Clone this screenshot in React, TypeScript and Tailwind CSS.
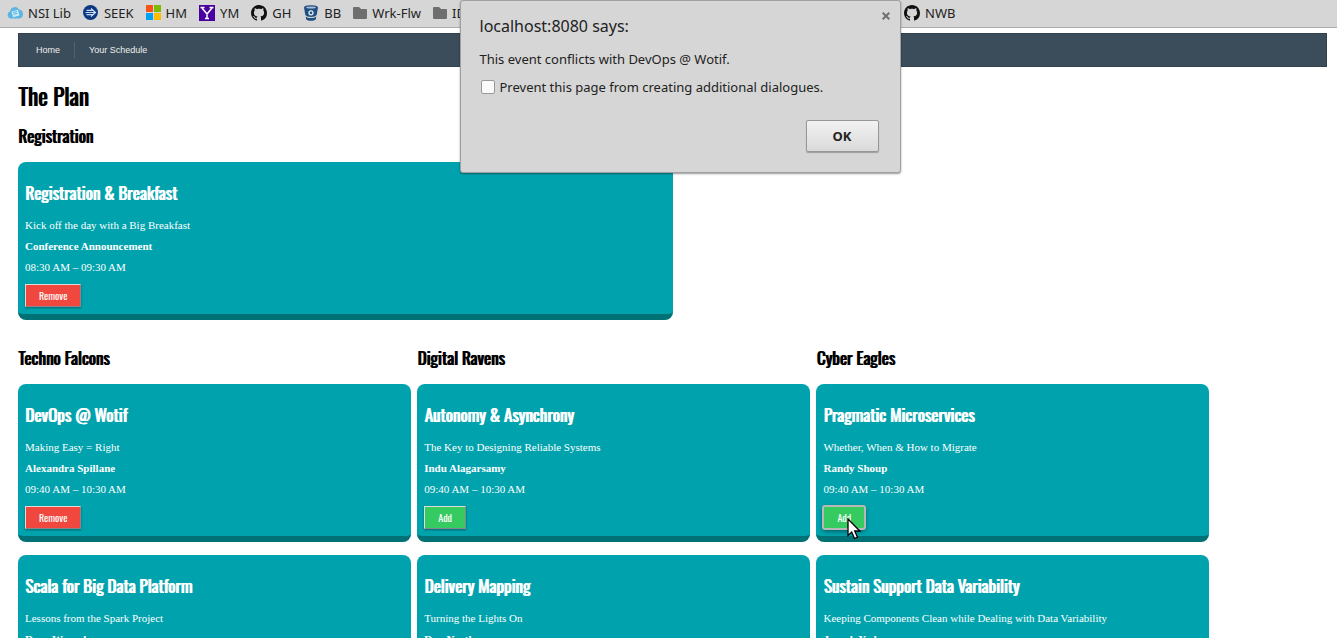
import type { ReactNode } from 'react';

type Session = {
  title: string;
  summary: string;
  speaker: string;
  time: string;
  added?: boolean;
  focused?: boolean;
};

type Track = { name: string; sessions: Session[] };

const registration: Session = {
  title: 'Registration & Breakfast',
  summary: 'Kick off the day with a Big Breakfast',
  speaker: 'Conference Announcement',
  time: '08:30 AM – 09:30 AM',
  added: true,
};

const tracks: Track[] = [
  {
    name: 'Techno Falcons',
    sessions: [
      { title: 'DevOps @ Wotif', summary: 'Making Easy = Right', speaker: 'Alexandra Spillane', time: '09:40 AM – 10:30 AM', added: true },
      { title: 'Scala for Big Data Platform', summary: 'Lessons from the Spark Project', speaker: 'Dean Wampler', time: '10:50 AM – 11:40 AM' },
    ],
  },
  {
    name: 'Digital Ravens',
    sessions: [
      { title: 'Autonomy & Asynchrony', summary: 'The Key to Designing Reliable Systems', speaker: 'Indu Alagarsamy', time: '09:40 AM – 10:30 AM' },
      { title: 'Delivery Mapping', summary: 'Turning the Lights On', speaker: 'Dan North', time: '10:50 AM – 11:40 AM' },
    ],
  },
  {
    name: 'Cyber Eagles',
    sessions: [
      { title: 'Pragmatic Microservices', summary: 'Whether, When & How to Migrate', speaker: 'Randy Shoup', time: '09:40 AM – 10:30 AM', focused: true },
      { title: 'Sustain Support Data Variability', summary: 'Keeping Components Clean while Dealing with Data Variability', speaker: 'Joseph Yoder', time: '10:50 AM – 11:40 AM' },
    ],
  },
];

const CONDENSED = "font-['Oswald','Liberation_Sans_Narrow','Roboto_Condensed',sans-serif]";
const HEADING = `${CONDENSED} font-normal whitespace-nowrap [text-shadow:1px_0_currentColor]`;

function CloudIcon() {
  return (
    <svg viewBox="0 0 16 16" className="size-4" aria-hidden="true">
      <path d="M4 13.500a3.700 3.700 0 0 1-.8-7.200A4.700 4.700 0 0 1 12 4.600a4.500 4.500 0 0 1 .2 8.900z" fill="#5bb5e4" />
      <path d="M4.500 6.500 11 4.800l1.500 5.700-6.500 1.700z" fill="#c9e8f7" />
      <path d="m6 7.500 4-1M6.500 9.300l4-1" stroke="#5bb5e4" fill="none" />
    </svg>
  );
}

function SeekIcon() {
  return (
    <svg viewBox="0 0 16 16" className="size-4" aria-hidden="true">
      <circle cx="7.500" cy="7.500" r="7.500" fill="#0d3880" />
      <path d="M2.500 7.500h10M3.500 5.300h7M3.500 9.700h7M8 3.500l4.500 4L8 11.500" stroke="#c4dcf6" strokeWidth="1.200" fill="none" />
    </svg>
  );
}

function WindowsIcon() {
  return (
    <svg viewBox="0 0 15 15" className="size-[15px]" aria-hidden="true">
      <path d="M0 0h7v7H0z" fill="#f65314" />
      <path d="M8 0h7v7H8z" fill="#7cbb00" />
      <path d="M0 8h7v7H0z" fill="#00a1f1" />
      <path d="M8 8h7v7H8z" fill="#ffbb00" />
    </svg>
  );
}

function YahooIcon() {
  return (
    <svg viewBox="0 0 16 16" className="size-4" aria-hidden="true">
      <path d="M0 0h16v16H0z" fill="#4a00a0" />
      <path d="m3 3 5 6 5-6M8 8.500V14M1.500 2.500h4M10.500 2.500h4M6 13.500h4" stroke="#fff" strokeWidth="1.500" fill="none" />
    </svg>
  );
}

function GithubIcon() {
  return (
    <svg viewBox="0 0 16 16" className="size-4" aria-hidden="true">
      <path
        fill="#111"
        d="M8 0C3.580 0 0 3.580 0 8c0 3.540 2.290 6.530 5.470 7.590.4.070.55-.17.55-.38 0-.19-.01-.82-.01-1.490-2.010.37-2.530-.49-2.690-.94-.09-.23-.48-.94-.82-1.130-.28-.15-.68-.52-.01-.53.63-.01 1.080.58 1.230.82.72 1.210 1.870.87 2.330.66.070-.52.28-.87.51-1.070-1.780-.2-3.640-.89-3.640-3.950 0-.87.31-1.590.82-2.150-.08-.2-.36-1.020.08-2.120 0 0 .67-.21 2.200.82.64-.18 1.320-.27 2-.27s1.360.09 2 .27c1.530-1.040 2.200-.82 2.200-.82.44 1.100.16 1.920.08 2.120.51.56.82 1.270.82 2.150 0 3.070-1.870 3.750-3.650 3.950.29.25.54.73.54 1.480 0 1.070-.01 1.930-.01 2.200 0 .21.15.46.55.38A8.010 8.010 0 0 0 16 8c0-4.420-3.580-8-8-8z"
      />
    </svg>
  );
}

function BucketIcon() {
  return (
    <svg viewBox="0 0 16 16" className="size-4" aria-hidden="true">
      <path d="M1 2.500C1 1 4 .2 8 .2s7 .8 7 2.300L13.700 10c-1 1.300-3 1.900-5.700 1.900S3.300 11.300 2.300 10z" fill="#205081" />
      <path d="M2.700 11.500c1.300 1 3.100 1.500 5.300 1.500s4-.5 5.300-1.500l-.5 3c-1 .9-2.700 1.300-4.800 1.300s-3.800-.4-4.800-1.300z" fill="#205081" />
      <ellipse cx="8" cy="2.500" rx="4.800" ry="1" fill="#a9bdd3" />
      <circle cx="8" cy="7.800" r="2" fill="none" stroke="#e8eef5" strokeWidth="1.300" />
    </svg>
  );
}

function FolderIcon() {
  return (
    <svg viewBox="0 0 14 12" className="h-3 w-3.5" aria-hidden="true">
      <path d="M0 1Q0 0 1 0h5l2 2h5q1 0 1 1v8q0 1-1 1H1q-1 0-1-1z" fill="#6e6e6e" />
    </svg>
  );
}

function Bookmark({ icon, children, className = '' }: { icon: ReactNode; children: ReactNode; className?: string }) {
  return (
    <a href="#" className={`flex shrink-0 items-center gap-[5px] ${className}`}>
      {icon}
      {children}
    </a>
  );
}

function BookmarkBar() {
  return (
    <nav aria-label="Bookmarks" className="flex h-7 items-center gap-3 border-b border-[#acacac] bg-[#d6d6d6] px-[7px] pb-0.5 font-['Noto_Sans',sans-serif] text-[13px] leading-5 text-[#222]">
      <Bookmark icon={<CloudIcon />}>NSI Lib</Bookmark>
      <Bookmark icon={<SeekIcon />}>SEEK</Bookmark>
      <Bookmark icon={<WindowsIcon />}>HM</Bookmark>
      <Bookmark icon={<YahooIcon />}>YM</Bookmark>
      <Bookmark icon={<GithubIcon />}>GH</Bookmark>
      <Bookmark icon={<BucketIcon />}>BB</Bookmark>
      <Bookmark icon={<FolderIcon />}>Wrk-Flw</Bookmark>
      <Bookmark icon={<FolderIcon />} className="w-[459px]">IDE</Bookmark>
      <Bookmark icon={<GithubIcon />}>NWB</Bookmark>
    </nav>
  );
}

function Pointer() {
  return (
    <svg viewBox="0 0 14 22" className="absolute top-3 left-6 h-[22px] w-3.5" aria-hidden="true">
      <path d="M1 1v16.500l3.700-3.400 2.800 6.400 3-1.300-2.800-6.200h5.100z" fill="#fff" stroke="#000" strokeWidth="1.300" />
    </svg>
  );
}

function SessionCard({ session }: { session: Session }) {
  return (
    <article className="rounded-lg border-b-6 border-[#007276] bg-[#00a3ad] px-[7px] pt-[15px] pb-[7px] text-white">
      <h3 className={`${HEADING} text-[17px] leading-8`}>{session.title}</h3>
      <div className="mt-1.5 font-['Liberation_Serif',serif] text-[11px] leading-[21px]">
        <p>{session.summary}</p>
        <p className="font-bold">{session.speaker}</p>
        <p>{session.time}</p>
      </div>
      <div className="relative mt-1.5 flex">
        <button
          type="button"
          className={`${CONDENSED} h-[23px] border px-[13px] text-[10px] leading-5 ${
            session.added ? 'bg-[#f0483e]' : 'bg-[#35cb61]'
          } ${
            session.focused
              ? 'rounded-xs border-[#b8b8b8] shadow-[0_0_0_1px_#b8b8b8,0_2px_5px_#005055]'
              : 'border-t-[#ddd] border-r-[#888] border-b-[#888] border-l-[#ddd] shadow-[0_1px_2px_#00686e]'
          }`}
        >
          {session.added ? 'Remove' : 'Add'}
        </button>
        {session.focused && <Pointer />}
      </div>
    </article>
  );
}

function TrackHeading({ children }: { children: ReactNode }) {
  return <h2 className={`${HEADING} text-[17px] leading-8`}>{children}</h2>;
}

function AlertDialog() {
  return (
    <div
      role="dialog"
      aria-labelledby="alert-title"
      className="absolute top-0 left-1/2 ml-[-209px] w-[441px] rounded-[3px] border border-[#a0a0a0] bg-[#d6d6d6] pt-[13px] pr-[21px] pb-5 pl-[19px] font-['Noto_Sans',sans-serif] text-[13px] leading-5 text-[#222] shadow-[0_1px_2px_#0006]"
    >
      <button type="button" aria-label="Close" className="absolute top-[11px] right-2.5">
        <svg viewBox="0 0 8 8" className="size-2" aria-hidden="true">
          <path d="m.7.7 6.600 6.600M7.300.7.7 7.300" stroke="#707070" strokeWidth="2" />
        </svg>
      </button>
      <h1 id="alert-title" className="text-[16px] leading-6">localhost:8080 says:</h1>
      <p className="mt-[11px]">This event conflicts with DevOps @ Wotif.</p>
      <label className="mt-2 flex items-center gap-[5px]">
        <input type="checkbox" className="ml-px size-3.5 appearance-none rounded-xs border border-[#999] bg-[#fafafa]" />
        Prevent this page from creating additional dialogues.
      </label>
      <div className="mt-[23px] flex justify-end">
        <button type="button" className="h-8 w-[73px] rounded-xs border border-[#979797] bg-linear-to-b from-[#f2f2f2] to-[#dadada] font-bold shadow-[0_1px_1px_#0004]">
          OK
        </button>
      </div>
    </div>
  );
}

export default function App() {
  return (
    <div className="relative h-screen overflow-hidden bg-white">
      <BookmarkBar />
      <div className="mt-[5px] mr-2.5 ml-[18px]">
        <nav aria-label="Main" className="flex h-[34px] items-center border border-[#31414e] bg-[#3b4c5a] px-[17px] font-['Liberation_Sans',sans-serif] text-[9px] leading-4 text-[#eee]">
          <a href="#" className="border-r border-[#53626e] pr-3.5">Home</a>
          <a href="#" className="pl-3.5">Your Schedule</a>
        </nav>
        <main>
          <h1 className={`${HEADING} mt-[9px] text-[23px] leading-10`}>The Plan</h1>
          <section className="mt-1 w-1/2">
            <TrackHeading>Registration</TrackHeading>
            <div className="mt-2.5">
              <SessionCard session={registration} />
            </div>
          </section>
          <div className="mt-[22px] flex gap-[0.5%]">
            {tracks.map((track) => (
              <section key={track.name} className="w-[30%]">
                <TrackHeading>{track.name}</TrackHeading>
                <div className="mt-2.5 flex flex-col gap-[13px]">
                  {track.sessions.map((session) => (
                    <SessionCard key={session.title} session={session} />
                  ))}
                </div>
              </section>
            ))}
          </div>
        </main>
      </div>
      <AlertDialog />
    </div>
  );
}
